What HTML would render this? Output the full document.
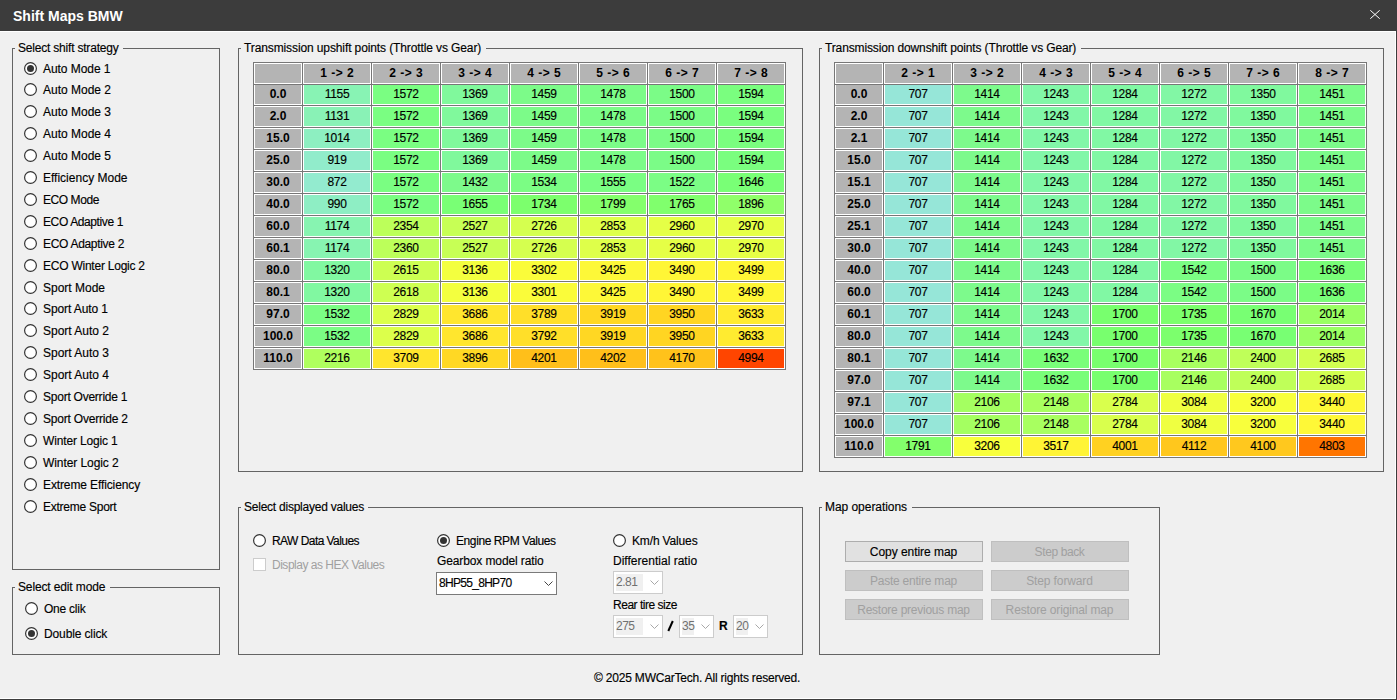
<!DOCTYPE html>
<html><head><meta charset="utf-8"><title>Shift Maps BMW</title>
<style>
*{margin:0;padding:0;box-sizing:border-box}
html,body{width:1397px;height:700px;overflow:hidden;background:#f0f0f0}
body{position:relative;font-family:"Liberation Sans",sans-serif;font-size:12px;color:#000;-webkit-text-stroke:0.15px currentColor}
div,i,span{position:absolute}
i{display:block}
#tbar{left:0;top:0;width:1397px;height:31px;background:#3c3c3c}
#title{left:13px;top:8px;color:#fff;font-weight:bold;font-size:14px;line-height:16px;white-space:nowrap;-webkit-text-stroke:0}
.gb{border:1px solid #646464}
.gt{background:#f0f0f0;padding:0 4.5px 0 3px;line-height:16px;white-space:nowrap;color:#000}
.tb{background:#fff}
.vl{position:absolute;top:0;width:1px;background:#777}
.hl{position:absolute;left:0;height:1px;background:#777}
.c{text-align:center;white-space:nowrap;overflow:hidden}
.c.b{font-weight:bold;-webkit-text-stroke:0}
.c.h{letter-spacing:0.45px;text-indent:0.45px}
.c.n{letter-spacing:-0.3px}
.lb{line-height:16px;white-space:nowrap}
.btn{height:21px;border:1px solid #adadad;background:#e1e1e1;text-align:center;line-height:19px;padding-top:1px;text-indent:-1px;white-space:nowrap}
.btn.dis{background:#cccccc;border-color:#bfbfbf;color:#a0a0a0;-webkit-text-stroke:0}
.cb{background:#fff;border:1px solid #7a7a7a}
.cb.dis{border-color:#cccccc}
</style></head><body>
<div id="tbar"></div>
<div id="title">Shift Maps BMW</div>

<svg style="position:absolute;left:1370px;top:10px" width="10" height="9" viewBox="0 0 10 9"><path d="M0.3 0.3L9.7 8.7M9.7 0.3L0.3 8.7" stroke="#fff" stroke-width="1"/></svg>
<i style="position:absolute;left:0;top:31px;width:1396px;height:1px;background:#fff"></i>
<i style="position:absolute;left:1395px;top:31px;width:1px;height:668px;background:#fff"></i>
<i style="position:absolute;left:0;top:698px;width:1396px;height:1px;background:#fff"></i>
<i style="position:absolute;left:1396px;top:0;width:1px;height:700px;background:#3c3c3c"></i>
<i style="position:absolute;left:0;top:699px;width:1397px;height:1px;background:#3c3c3c"></i>
<div class="gb" style="left:12px;top:48px;width:208px;height:522px"></div><div class="gt" style="left:15px;top:40px;letter-spacing:-0.200px;">Select shift strategy</div>
<svg style="position:absolute;left:24px;top:62px" width="13" height="13" viewBox="0 0 13 13"><circle cx="6.5" cy="6.5" r="5.9" fill="#fff" stroke="#333" stroke-width="1.2"/><circle cx="6.5" cy="6.5" r="3.5" fill="#333"/></svg><div class="lb" style="left:43px;top:61px;letter-spacing:-0.050px;">Auto Mode 1</div>
<svg style="position:absolute;left:24px;top:83px" width="13" height="13" viewBox="0 0 13 13"><circle cx="6.5" cy="6.5" r="5.9" fill="#fff" stroke="#333" stroke-width="1.2"/></svg><div class="lb" style="left:43px;top:82px;letter-spacing:0.000px;">Auto Mode 2</div>
<svg style="position:absolute;left:24px;top:105px" width="13" height="13" viewBox="0 0 13 13"><circle cx="6.5" cy="6.5" r="5.9" fill="#fff" stroke="#333" stroke-width="1.2"/></svg><div class="lb" style="left:43px;top:104px;letter-spacing:0.000px;">Auto Mode 3</div>
<svg style="position:absolute;left:24px;top:127px" width="13" height="13" viewBox="0 0 13 13"><circle cx="6.5" cy="6.5" r="5.9" fill="#fff" stroke="#333" stroke-width="1.2"/></svg><div class="lb" style="left:43px;top:126px;letter-spacing:0.000px;">Auto Mode 4</div>
<svg style="position:absolute;left:24px;top:149px" width="13" height="13" viewBox="0 0 13 13"><circle cx="6.5" cy="6.5" r="5.9" fill="#fff" stroke="#333" stroke-width="1.2"/></svg><div class="lb" style="left:43px;top:148px;letter-spacing:0.000px;">Auto Mode 5</div>
<svg style="position:absolute;left:24px;top:171px" width="13" height="13" viewBox="0 0 13 13"><circle cx="6.5" cy="6.5" r="5.9" fill="#fff" stroke="#333" stroke-width="1.2"/></svg><div class="lb" style="left:43px;top:170px;letter-spacing:0.000px;">Efficiency Mode</div>
<svg style="position:absolute;left:24px;top:193px" width="13" height="13" viewBox="0 0 13 13"><circle cx="6.5" cy="6.5" r="5.9" fill="#fff" stroke="#333" stroke-width="1.2"/></svg><div class="lb" style="left:43px;top:192px;letter-spacing:-0.429px;">ECO Mode</div>
<svg style="position:absolute;left:24px;top:215px" width="13" height="13" viewBox="0 0 13 13"><circle cx="6.5" cy="6.5" r="5.9" fill="#fff" stroke="#333" stroke-width="1.2"/></svg><div class="lb" style="left:43px;top:214px;letter-spacing:-0.385px;">ECO Adaptive 1</div>
<svg style="position:absolute;left:24px;top:237px" width="13" height="13" viewBox="0 0 13 13"><circle cx="6.5" cy="6.5" r="5.9" fill="#fff" stroke="#333" stroke-width="1.2"/></svg><div class="lb" style="left:43px;top:236px;letter-spacing:-0.308px;">ECO Adaptive 2</div>
<svg style="position:absolute;left:24px;top:259px" width="13" height="13" viewBox="0 0 13 13"><circle cx="6.5" cy="6.5" r="5.9" fill="#fff" stroke="#333" stroke-width="1.2"/></svg><div class="lb" style="left:43px;top:258px;letter-spacing:-0.235px;">ECO Winter Logic 2</div>
<svg style="position:absolute;left:24px;top:281px" width="13" height="13" viewBox="0 0 13 13"><circle cx="6.5" cy="6.5" r="5.9" fill="#fff" stroke="#333" stroke-width="1.2"/></svg><div class="lb" style="left:43px;top:280px;letter-spacing:0.000px;">Sport Mode</div>
<svg style="position:absolute;left:24px;top:302px" width="13" height="13" viewBox="0 0 13 13"><circle cx="6.5" cy="6.5" r="5.9" fill="#fff" stroke="#333" stroke-width="1.2"/></svg><div class="lb" style="left:43px;top:301px;letter-spacing:-0.091px;">Sport Auto 1</div>
<svg style="position:absolute;left:24px;top:324px" width="13" height="13" viewBox="0 0 13 13"><circle cx="6.5" cy="6.5" r="5.9" fill="#fff" stroke="#333" stroke-width="1.2"/></svg><div class="lb" style="left:43px;top:323px;letter-spacing:0.000px;">Sport Auto 2</div>
<svg style="position:absolute;left:24px;top:346px" width="13" height="13" viewBox="0 0 13 13"><circle cx="6.5" cy="6.5" r="5.9" fill="#fff" stroke="#333" stroke-width="1.2"/></svg><div class="lb" style="left:43px;top:345px;letter-spacing:0.000px;">Sport Auto 3</div>
<svg style="position:absolute;left:24px;top:368px" width="13" height="13" viewBox="0 0 13 13"><circle cx="6.5" cy="6.5" r="5.9" fill="#fff" stroke="#333" stroke-width="1.2"/></svg><div class="lb" style="left:43px;top:367px;letter-spacing:0.000px;">Sport Auto 4</div>
<svg style="position:absolute;left:24px;top:390px" width="13" height="13" viewBox="0 0 13 13"><circle cx="6.5" cy="6.5" r="5.9" fill="#fff" stroke="#333" stroke-width="1.2"/></svg><div class="lb" style="left:43px;top:389px;letter-spacing:-0.240px;">Sport Override 1</div>
<svg style="position:absolute;left:24px;top:412px" width="13" height="13" viewBox="0 0 13 13"><circle cx="6.5" cy="6.5" r="5.9" fill="#fff" stroke="#333" stroke-width="1.2"/></svg><div class="lb" style="left:43px;top:411px;letter-spacing:-0.200px;">Sport Override 2</div>
<svg style="position:absolute;left:24px;top:434px" width="13" height="13" viewBox="0 0 13 13"><circle cx="6.5" cy="6.5" r="5.9" fill="#fff" stroke="#333" stroke-width="1.2"/></svg><div class="lb" style="left:43px;top:433px;letter-spacing:-0.154px;">Winter Logic 1</div>
<svg style="position:absolute;left:24px;top:456px" width="13" height="13" viewBox="0 0 13 13"><circle cx="6.5" cy="6.5" r="5.9" fill="#fff" stroke="#333" stroke-width="1.2"/></svg><div class="lb" style="left:43px;top:455px;letter-spacing:-0.077px;">Winter Logic 2</div>
<svg style="position:absolute;left:24px;top:478px" width="13" height="13" viewBox="0 0 13 13"><circle cx="6.5" cy="6.5" r="5.9" fill="#fff" stroke="#333" stroke-width="1.2"/></svg><div class="lb" style="left:43px;top:477px;letter-spacing:-0.118px;">Extreme Efficiency</div>
<svg style="position:absolute;left:24px;top:500px" width="13" height="13" viewBox="0 0 13 13"><circle cx="6.5" cy="6.5" r="5.9" fill="#fff" stroke="#333" stroke-width="1.2"/></svg><div class="lb" style="left:43px;top:499px;letter-spacing:-0.250px;">Extreme Sport</div>
<div class="gb" style="left:12px;top:587px;width:208px;height:68px"></div><div class="gt" style="left:15px;top:579px;letter-spacing:-0.133px;">Select edit mode</div>
<svg style="position:absolute;left:25px;top:602px" width="13" height="13" viewBox="0 0 13 13"><circle cx="6.5" cy="6.5" r="5.9" fill="#fff" stroke="#333" stroke-width="1.2"/></svg><div class="lb" style="left:44px;top:601px;letter-spacing:-0.243px;">One clik</div>
<svg style="position:absolute;left:25px;top:627px" width="13" height="13" viewBox="0 0 13 13"><circle cx="6.5" cy="6.5" r="5.9" fill="#fff" stroke="#333" stroke-width="1.2"/><circle cx="6.5" cy="6.5" r="3.5" fill="#333"/></svg><div class="lb" style="left:44px;top:626px;letter-spacing:-0.127px;">Double click</div>
<div class="gb" style="left:238px;top:48px;width:565px;height:424px"></div><div class="gt" style="left:241px;top:40px;letter-spacing:-0.111px;">Transmission upshift points (Throttle vs Gear)</div>
<div class="tb" style="left:253px;top:62px;width:533px;height:308px">
<i class="vl" style="left:0px;height:308px"></i>
<i class="vl" style="left:49px;height:308px"></i>
<i class="vl" style="left:118px;height:308px"></i>
<i class="vl" style="left:187px;height:308px"></i>
<i class="vl" style="left:256px;height:308px"></i>
<i class="vl" style="left:325px;height:308px"></i>
<i class="vl" style="left:394px;height:308px"></i>
<i class="vl" style="left:463px;height:308px"></i>
<i class="vl" style="left:532px;height:308px"></i>
<i class="hl" style="top:0px;width:533px"></i>
<i class="hl" style="top:22px;width:533px"></i>
<i class="hl" style="top:43px;width:533px"></i>
<i class="hl" style="top:65px;width:533px"></i>
<i class="hl" style="top:87px;width:533px"></i>
<i class="hl" style="top:109px;width:533px"></i>
<i class="hl" style="top:131px;width:533px"></i>
<i class="hl" style="top:153px;width:533px"></i>
<i class="hl" style="top:175px;width:533px"></i>
<i class="hl" style="top:197px;width:533px"></i>
<i class="hl" style="top:219px;width:533px"></i>
<i class="hl" style="top:241px;width:533px"></i>
<i class="hl" style="top:263px;width:533px"></i>
<i class="hl" style="top:285px;width:533px"></i>
<i class="hl" style="top:307px;width:533px"></i>
<div class="c b h" style="left:2px;top:2px;width:46px;height:19px;background:#b4b4b4;line-height:19px"></div>
<div class="c b h" style="left:51px;top:2px;width:66px;height:19px;background:#b4b4b4;line-height:19px">1 -> 2</div>
<div class="c b h" style="left:120px;top:2px;width:66px;height:19px;background:#b4b4b4;line-height:19px">2 -> 3</div>
<div class="c b h" style="left:189px;top:2px;width:66px;height:19px;background:#b4b4b4;line-height:19px">3 -> 4</div>
<div class="c b h" style="left:258px;top:2px;width:66px;height:19px;background:#b4b4b4;line-height:19px">4 -> 5</div>
<div class="c b h" style="left:327px;top:2px;width:66px;height:19px;background:#b4b4b4;line-height:19px">5 -> 6</div>
<div class="c b h" style="left:396px;top:2px;width:66px;height:19px;background:#b4b4b4;line-height:19px">6 -> 7</div>
<div class="c b h" style="left:465px;top:2px;width:66px;height:19px;background:#b4b4b4;line-height:19px">7 -> 8</div>
<div class="c b" style="left:2px;top:23px;width:46px;height:19px;background:#b4b4b4;line-height:19px">0.0</div>
<div class="c n" style="left:51px;top:23px;width:66px;height:19px;background:#88f3b4;line-height:19px">1155</div>
<div class="c n" style="left:120px;top:23px;width:66px;height:19px;background:#7afe82;line-height:19px">1572</div>
<div class="c n" style="left:189px;top:23px;width:66px;height:19px;background:#80f99c;line-height:19px">1369</div>
<div class="c n" style="left:258px;top:23px;width:66px;height:19px;background:#7cfb89;line-height:19px">1459</div>
<div class="c n" style="left:327px;top:23px;width:66px;height:19px;background:#7cfc88;line-height:19px">1478</div>
<div class="c n" style="left:396px;top:23px;width:66px;height:19px;background:#7bfc87;line-height:19px">1500</div>
<div class="c n" style="left:465px;top:23px;width:66px;height:19px;background:#7afe7f;line-height:19px">1594</div>
<div class="c b" style="left:2px;top:45px;width:46px;height:19px;background:#b4b4b4;line-height:19px">2.0</div>
<div class="c n" style="left:51px;top:45px;width:66px;height:19px;background:#89f2b6;line-height:19px">1131</div>
<div class="c n" style="left:120px;top:45px;width:66px;height:19px;background:#7afe82;line-height:19px">1572</div>
<div class="c n" style="left:189px;top:45px;width:66px;height:19px;background:#80f99c;line-height:19px">1369</div>
<div class="c n" style="left:258px;top:45px;width:66px;height:19px;background:#7cfb89;line-height:19px">1459</div>
<div class="c n" style="left:327px;top:45px;width:66px;height:19px;background:#7cfc88;line-height:19px">1478</div>
<div class="c n" style="left:396px;top:45px;width:66px;height:19px;background:#7bfc87;line-height:19px">1500</div>
<div class="c n" style="left:465px;top:45px;width:66px;height:19px;background:#7afe7f;line-height:19px">1594</div>
<div class="c b" style="left:2px;top:67px;width:46px;height:19px;background:#b4b4b4;line-height:19px">15.0</div>
<div class="c n" style="left:51px;top:67px;width:66px;height:19px;background:#8defc1;line-height:19px">1014</div>
<div class="c n" style="left:120px;top:67px;width:66px;height:19px;background:#7afe82;line-height:19px">1572</div>
<div class="c n" style="left:189px;top:67px;width:66px;height:19px;background:#80f99c;line-height:19px">1369</div>
<div class="c n" style="left:258px;top:67px;width:66px;height:19px;background:#7cfb89;line-height:19px">1459</div>
<div class="c n" style="left:327px;top:67px;width:66px;height:19px;background:#7cfc88;line-height:19px">1478</div>
<div class="c n" style="left:396px;top:67px;width:66px;height:19px;background:#7bfc87;line-height:19px">1500</div>
<div class="c n" style="left:465px;top:67px;width:66px;height:19px;background:#7afe7f;line-height:19px">1594</div>
<div class="c b" style="left:2px;top:89px;width:46px;height:19px;background:#b4b4b4;line-height:19px">25.0</div>
<div class="c n" style="left:51px;top:89px;width:66px;height:19px;background:#91eccb;line-height:19px">919</div>
<div class="c n" style="left:120px;top:89px;width:66px;height:19px;background:#7afe82;line-height:19px">1572</div>
<div class="c n" style="left:189px;top:89px;width:66px;height:19px;background:#80f99c;line-height:19px">1369</div>
<div class="c n" style="left:258px;top:89px;width:66px;height:19px;background:#7cfb89;line-height:19px">1459</div>
<div class="c n" style="left:327px;top:89px;width:66px;height:19px;background:#7cfc88;line-height:19px">1478</div>
<div class="c n" style="left:396px;top:89px;width:66px;height:19px;background:#7bfc87;line-height:19px">1500</div>
<div class="c n" style="left:465px;top:89px;width:66px;height:19px;background:#7afe7f;line-height:19px">1594</div>
<div class="c b" style="left:2px;top:111px;width:46px;height:19px;background:#b4b4b4;line-height:19px">30.0</div>
<div class="c n" style="left:51px;top:111px;width:66px;height:19px;background:#93ebcf;line-height:19px">872</div>
<div class="c n" style="left:120px;top:111px;width:66px;height:19px;background:#7afe82;line-height:19px">1572</div>
<div class="c n" style="left:189px;top:111px;width:66px;height:19px;background:#7dfa8b;line-height:19px">1432</div>
<div class="c n" style="left:258px;top:111px;width:66px;height:19px;background:#7bfd84;line-height:19px">1534</div>
<div class="c n" style="left:327px;top:111px;width:66px;height:19px;background:#7afe83;line-height:19px">1555</div>
<div class="c n" style="left:396px;top:111px;width:66px;height:19px;background:#7bfd85;line-height:19px">1522</div>
<div class="c n" style="left:465px;top:111px;width:66px;height:19px;background:#79ff76;line-height:19px">1646</div>
<div class="c b" style="left:2px;top:133px;width:46px;height:19px;background:#b4b4b4;line-height:19px">40.0</div>
<div class="c n" style="left:51px;top:133px;width:66px;height:19px;background:#8eeec4;line-height:19px">990</div>
<div class="c n" style="left:120px;top:133px;width:66px;height:19px;background:#7afe82;line-height:19px">1572</div>
<div class="c n" style="left:189px;top:133px;width:66px;height:19px;background:#79ff75;line-height:19px">1655</div>
<div class="c n" style="left:258px;top:133px;width:66px;height:19px;background:#7cff6d;line-height:19px">1734</div>
<div class="c n" style="left:327px;top:133px;width:66px;height:19px;background:#84ff6c;line-height:19px">1799</div>
<div class="c n" style="left:396px;top:133px;width:66px;height:19px;background:#80ff6d;line-height:19px">1765</div>
<div class="c n" style="left:465px;top:133px;width:66px;height:19px;background:#90ff6a;line-height:19px">1896</div>
<div class="c b" style="left:2px;top:155px;width:46px;height:19px;background:#b4b4b4;line-height:19px">60.0</div>
<div class="c n" style="left:51px;top:155px;width:66px;height:19px;background:#87f4b1;line-height:19px">1174</div>
<div class="c n" style="left:120px;top:155px;width:66px;height:19px;background:#bcff5a;line-height:19px">2354</div>
<div class="c n" style="left:189px;top:155px;width:66px;height:19px;background:#c7ff55;line-height:19px">2527</div>
<div class="c n" style="left:258px;top:155px;width:66px;height:19px;background:#d5ff4f;line-height:19px">2726</div>
<div class="c n" style="left:327px;top:155px;width:66px;height:19px;background:#deff4a;line-height:19px">2853</div>
<div class="c n" style="left:396px;top:155px;width:66px;height:19px;background:#e5ff46;line-height:19px">2960</div>
<div class="c n" style="left:465px;top:155px;width:66px;height:19px;background:#e6ff46;line-height:19px">2970</div>
<div class="c b" style="left:2px;top:177px;width:46px;height:19px;background:#b4b4b4;line-height:19px">60.1</div>
<div class="c n" style="left:51px;top:177px;width:66px;height:19px;background:#87f4b1;line-height:19px">1174</div>
<div class="c n" style="left:120px;top:177px;width:66px;height:19px;background:#bcff5a;line-height:19px">2360</div>
<div class="c n" style="left:189px;top:177px;width:66px;height:19px;background:#c7ff55;line-height:19px">2527</div>
<div class="c n" style="left:258px;top:177px;width:66px;height:19px;background:#d5ff4f;line-height:19px">2726</div>
<div class="c n" style="left:327px;top:177px;width:66px;height:19px;background:#deff4a;line-height:19px">2853</div>
<div class="c n" style="left:396px;top:177px;width:66px;height:19px;background:#e5ff46;line-height:19px">2960</div>
<div class="c n" style="left:465px;top:177px;width:66px;height:19px;background:#e6ff46;line-height:19px">2970</div>
<div class="c b" style="left:2px;top:199px;width:46px;height:19px;background:#b4b4b4;line-height:19px">80.0</div>
<div class="c n" style="left:51px;top:199px;width:66px;height:19px;background:#81f8a1;line-height:19px">1320</div>
<div class="c n" style="left:120px;top:199px;width:66px;height:19px;background:#cdff52;line-height:19px">2615</div>
<div class="c n" style="left:189px;top:199px;width:66px;height:19px;background:#f3ff3f;line-height:19px">3136</div>
<div class="c n" style="left:258px;top:199px;width:66px;height:19px;background:#fafc3a;line-height:19px">3302</div>
<div class="c n" style="left:327px;top:199px;width:66px;height:19px;background:#fdf838;line-height:19px">3425</div>
<div class="c n" style="left:396px;top:199px;width:66px;height:19px;background:#fff636;line-height:19px">3490</div>
<div class="c n" style="left:465px;top:199px;width:66px;height:19px;background:#fff636;line-height:19px">3499</div>
<div class="c b" style="left:2px;top:221px;width:46px;height:19px;background:#b4b4b4;line-height:19px">80.1</div>
<div class="c n" style="left:51px;top:221px;width:66px;height:19px;background:#81f8a1;line-height:19px">1320</div>
<div class="c n" style="left:120px;top:221px;width:66px;height:19px;background:#ceff52;line-height:19px">2618</div>
<div class="c n" style="left:189px;top:221px;width:66px;height:19px;background:#f3ff3f;line-height:19px">3136</div>
<div class="c n" style="left:258px;top:221px;width:66px;height:19px;background:#fafc3a;line-height:19px">3301</div>
<div class="c n" style="left:327px;top:221px;width:66px;height:19px;background:#fdf838;line-height:19px">3425</div>
<div class="c n" style="left:396px;top:221px;width:66px;height:19px;background:#fff636;line-height:19px">3490</div>
<div class="c n" style="left:465px;top:221px;width:66px;height:19px;background:#fff636;line-height:19px">3499</div>
<div class="c b" style="left:2px;top:243px;width:46px;height:19px;background:#b4b4b4;line-height:19px">97.0</div>
<div class="c n" style="left:51px;top:243px;width:66px;height:19px;background:#7bfd85;line-height:19px">1532</div>
<div class="c n" style="left:120px;top:243px;width:66px;height:19px;background:#dcff4b;line-height:19px">2829</div>
<div class="c n" style="left:189px;top:243px;width:66px;height:19px;background:#ffe62e;line-height:19px">3686</div>
<div class="c n" style="left:258px;top:243px;width:66px;height:19px;background:#ffdf29;line-height:19px">3789</div>
<div class="c n" style="left:327px;top:243px;width:66px;height:19px;background:#ffd723;line-height:19px">3919</div>
<div class="c n" style="left:396px;top:243px;width:66px;height:19px;background:#ffd522;line-height:19px">3950</div>
<div class="c n" style="left:465px;top:243px;width:66px;height:19px;background:#ffeb30;line-height:19px">3633</div>
<div class="c b" style="left:2px;top:265px;width:46px;height:19px;background:#b4b4b4;line-height:19px">100.0</div>
<div class="c n" style="left:51px;top:265px;width:66px;height:19px;background:#7bfd85;line-height:19px">1532</div>
<div class="c n" style="left:120px;top:265px;width:66px;height:19px;background:#dcff4b;line-height:19px">2829</div>
<div class="c n" style="left:189px;top:265px;width:66px;height:19px;background:#ffe62e;line-height:19px">3686</div>
<div class="c n" style="left:258px;top:265px;width:66px;height:19px;background:#ffdf29;line-height:19px">3792</div>
<div class="c n" style="left:327px;top:265px;width:66px;height:19px;background:#ffd723;line-height:19px">3919</div>
<div class="c n" style="left:396px;top:265px;width:66px;height:19px;background:#ffd522;line-height:19px">3950</div>
<div class="c n" style="left:465px;top:265px;width:66px;height:19px;background:#ffeb30;line-height:19px">3633</div>
<div class="c b" style="left:2px;top:287px;width:46px;height:19px;background:#b4b4b4;line-height:19px">110.0</div>
<div class="c n" style="left:51px;top:287px;width:66px;height:19px;background:#afff5e;line-height:19px">2216</div>
<div class="c n" style="left:120px;top:287px;width:66px;height:19px;background:#ffe52d;line-height:19px">3709</div>
<div class="c n" style="left:189px;top:287px;width:66px;height:19px;background:#ffd824;line-height:19px">3896</div>
<div class="c n" style="left:258px;top:287px;width:66px;height:19px;background:#ffbf1a;line-height:19px">4201</div>
<div class="c n" style="left:327px;top:287px;width:66px;height:19px;background:#ffbf1a;line-height:19px">4202</div>
<div class="c n" style="left:396px;top:287px;width:66px;height:19px;background:#ffc21b;line-height:19px">4170</div>
<div class="c n" style="left:465px;top:287px;width:66px;height:19px;background:#ff4500;line-height:19px">4994</div>
</div>
<div class="gb" style="left:819px;top:48px;width:565px;height:424px"></div><div class="gt" style="left:822px;top:40px;letter-spacing:-0.134px;">Transmission downshift points (Throttle vs Gear)</div>
<div class="tb" style="left:834px;top:62px;width:533px;height:396px">
<i class="vl" style="left:0px;height:396px"></i>
<i class="vl" style="left:49px;height:396px"></i>
<i class="vl" style="left:118px;height:396px"></i>
<i class="vl" style="left:187px;height:396px"></i>
<i class="vl" style="left:256px;height:396px"></i>
<i class="vl" style="left:325px;height:396px"></i>
<i class="vl" style="left:394px;height:396px"></i>
<i class="vl" style="left:463px;height:396px"></i>
<i class="vl" style="left:532px;height:396px"></i>
<i class="hl" style="top:0px;width:533px"></i>
<i class="hl" style="top:22px;width:533px"></i>
<i class="hl" style="top:43px;width:533px"></i>
<i class="hl" style="top:65px;width:533px"></i>
<i class="hl" style="top:87px;width:533px"></i>
<i class="hl" style="top:109px;width:533px"></i>
<i class="hl" style="top:131px;width:533px"></i>
<i class="hl" style="top:153px;width:533px"></i>
<i class="hl" style="top:175px;width:533px"></i>
<i class="hl" style="top:197px;width:533px"></i>
<i class="hl" style="top:219px;width:533px"></i>
<i class="hl" style="top:241px;width:533px"></i>
<i class="hl" style="top:263px;width:533px"></i>
<i class="hl" style="top:285px;width:533px"></i>
<i class="hl" style="top:307px;width:533px"></i>
<i class="hl" style="top:329px;width:533px"></i>
<i class="hl" style="top:351px;width:533px"></i>
<i class="hl" style="top:373px;width:533px"></i>
<i class="hl" style="top:395px;width:533px"></i>
<div class="c b h" style="left:2px;top:2px;width:46px;height:19px;background:#b4b4b4;line-height:19px"></div>
<div class="c b h" style="left:51px;top:2px;width:66px;height:19px;background:#b4b4b4;line-height:19px">2 -> 1</div>
<div class="c b h" style="left:120px;top:2px;width:66px;height:19px;background:#b4b4b4;line-height:19px">3 -> 2</div>
<div class="c b h" style="left:189px;top:2px;width:66px;height:19px;background:#b4b4b4;line-height:19px">4 -> 3</div>
<div class="c b h" style="left:258px;top:2px;width:66px;height:19px;background:#b4b4b4;line-height:19px">5 -> 4</div>
<div class="c b h" style="left:327px;top:2px;width:66px;height:19px;background:#b4b4b4;line-height:19px">6 -> 5</div>
<div class="c b h" style="left:396px;top:2px;width:66px;height:19px;background:#b4b4b4;line-height:19px">7 -> 6</div>
<div class="c b h" style="left:465px;top:2px;width:66px;height:19px;background:#b4b4b4;line-height:19px">8 -> 7</div>
<div class="c b" style="left:2px;top:23px;width:46px;height:19px;background:#b4b4b4;line-height:19px">0.0</div>
<div class="c n" style="left:51px;top:23px;width:66px;height:19px;background:#96e6d8;line-height:19px">707</div>
<div class="c n" style="left:120px;top:23px;width:66px;height:19px;background:#7dfa8c;line-height:19px">1414</div>
<div class="c n" style="left:189px;top:23px;width:66px;height:19px;background:#82f7a8;line-height:19px">1243</div>
<div class="c n" style="left:258px;top:23px;width:66px;height:19px;background:#81f8a4;line-height:19px">1284</div>
<div class="c n" style="left:327px;top:23px;width:66px;height:19px;background:#82f7a5;line-height:19px">1272</div>
<div class="c n" style="left:396px;top:23px;width:66px;height:19px;background:#80f99e;line-height:19px">1350</div>
<div class="c n" style="left:465px;top:23px;width:66px;height:19px;background:#7cfb8a;line-height:19px">1451</div>
<div class="c b" style="left:2px;top:45px;width:46px;height:19px;background:#b4b4b4;line-height:19px">2.0</div>
<div class="c n" style="left:51px;top:45px;width:66px;height:19px;background:#96e6d8;line-height:19px">707</div>
<div class="c n" style="left:120px;top:45px;width:66px;height:19px;background:#7dfa8c;line-height:19px">1414</div>
<div class="c n" style="left:189px;top:45px;width:66px;height:19px;background:#82f7a8;line-height:19px">1243</div>
<div class="c n" style="left:258px;top:45px;width:66px;height:19px;background:#81f8a4;line-height:19px">1284</div>
<div class="c n" style="left:327px;top:45px;width:66px;height:19px;background:#82f7a5;line-height:19px">1272</div>
<div class="c n" style="left:396px;top:45px;width:66px;height:19px;background:#80f99e;line-height:19px">1350</div>
<div class="c n" style="left:465px;top:45px;width:66px;height:19px;background:#7cfb8a;line-height:19px">1451</div>
<div class="c b" style="left:2px;top:67px;width:46px;height:19px;background:#b4b4b4;line-height:19px">2.1</div>
<div class="c n" style="left:51px;top:67px;width:66px;height:19px;background:#96e6d8;line-height:19px">707</div>
<div class="c n" style="left:120px;top:67px;width:66px;height:19px;background:#7dfa8c;line-height:19px">1414</div>
<div class="c n" style="left:189px;top:67px;width:66px;height:19px;background:#82f7a8;line-height:19px">1243</div>
<div class="c n" style="left:258px;top:67px;width:66px;height:19px;background:#81f8a4;line-height:19px">1284</div>
<div class="c n" style="left:327px;top:67px;width:66px;height:19px;background:#82f7a5;line-height:19px">1272</div>
<div class="c n" style="left:396px;top:67px;width:66px;height:19px;background:#80f99e;line-height:19px">1350</div>
<div class="c n" style="left:465px;top:67px;width:66px;height:19px;background:#7cfb8a;line-height:19px">1451</div>
<div class="c b" style="left:2px;top:89px;width:46px;height:19px;background:#b4b4b4;line-height:19px">15.0</div>
<div class="c n" style="left:51px;top:89px;width:66px;height:19px;background:#96e6d8;line-height:19px">707</div>
<div class="c n" style="left:120px;top:89px;width:66px;height:19px;background:#7dfa8c;line-height:19px">1414</div>
<div class="c n" style="left:189px;top:89px;width:66px;height:19px;background:#82f7a8;line-height:19px">1243</div>
<div class="c n" style="left:258px;top:89px;width:66px;height:19px;background:#81f8a4;line-height:19px">1284</div>
<div class="c n" style="left:327px;top:89px;width:66px;height:19px;background:#82f7a5;line-height:19px">1272</div>
<div class="c n" style="left:396px;top:89px;width:66px;height:19px;background:#80f99e;line-height:19px">1350</div>
<div class="c n" style="left:465px;top:89px;width:66px;height:19px;background:#7cfb8a;line-height:19px">1451</div>
<div class="c b" style="left:2px;top:111px;width:46px;height:19px;background:#b4b4b4;line-height:19px">15.1</div>
<div class="c n" style="left:51px;top:111px;width:66px;height:19px;background:#96e6d8;line-height:19px">707</div>
<div class="c n" style="left:120px;top:111px;width:66px;height:19px;background:#7dfa8c;line-height:19px">1414</div>
<div class="c n" style="left:189px;top:111px;width:66px;height:19px;background:#82f7a8;line-height:19px">1243</div>
<div class="c n" style="left:258px;top:111px;width:66px;height:19px;background:#81f8a4;line-height:19px">1284</div>
<div class="c n" style="left:327px;top:111px;width:66px;height:19px;background:#82f7a5;line-height:19px">1272</div>
<div class="c n" style="left:396px;top:111px;width:66px;height:19px;background:#80f99e;line-height:19px">1350</div>
<div class="c n" style="left:465px;top:111px;width:66px;height:19px;background:#7cfb8a;line-height:19px">1451</div>
<div class="c b" style="left:2px;top:133px;width:46px;height:19px;background:#b4b4b4;line-height:19px">25.0</div>
<div class="c n" style="left:51px;top:133px;width:66px;height:19px;background:#96e6d8;line-height:19px">707</div>
<div class="c n" style="left:120px;top:133px;width:66px;height:19px;background:#7dfa8c;line-height:19px">1414</div>
<div class="c n" style="left:189px;top:133px;width:66px;height:19px;background:#82f7a8;line-height:19px">1243</div>
<div class="c n" style="left:258px;top:133px;width:66px;height:19px;background:#81f8a4;line-height:19px">1284</div>
<div class="c n" style="left:327px;top:133px;width:66px;height:19px;background:#82f7a5;line-height:19px">1272</div>
<div class="c n" style="left:396px;top:133px;width:66px;height:19px;background:#80f99e;line-height:19px">1350</div>
<div class="c n" style="left:465px;top:133px;width:66px;height:19px;background:#7cfb8a;line-height:19px">1451</div>
<div class="c b" style="left:2px;top:155px;width:46px;height:19px;background:#b4b4b4;line-height:19px">25.1</div>
<div class="c n" style="left:51px;top:155px;width:66px;height:19px;background:#96e6d8;line-height:19px">707</div>
<div class="c n" style="left:120px;top:155px;width:66px;height:19px;background:#7dfa8c;line-height:19px">1414</div>
<div class="c n" style="left:189px;top:155px;width:66px;height:19px;background:#82f7a8;line-height:19px">1243</div>
<div class="c n" style="left:258px;top:155px;width:66px;height:19px;background:#81f8a4;line-height:19px">1284</div>
<div class="c n" style="left:327px;top:155px;width:66px;height:19px;background:#82f7a5;line-height:19px">1272</div>
<div class="c n" style="left:396px;top:155px;width:66px;height:19px;background:#80f99e;line-height:19px">1350</div>
<div class="c n" style="left:465px;top:155px;width:66px;height:19px;background:#7cfb8a;line-height:19px">1451</div>
<div class="c b" style="left:2px;top:177px;width:46px;height:19px;background:#b4b4b4;line-height:19px">30.0</div>
<div class="c n" style="left:51px;top:177px;width:66px;height:19px;background:#96e6d8;line-height:19px">707</div>
<div class="c n" style="left:120px;top:177px;width:66px;height:19px;background:#7dfa8c;line-height:19px">1414</div>
<div class="c n" style="left:189px;top:177px;width:66px;height:19px;background:#82f7a8;line-height:19px">1243</div>
<div class="c n" style="left:258px;top:177px;width:66px;height:19px;background:#81f8a4;line-height:19px">1284</div>
<div class="c n" style="left:327px;top:177px;width:66px;height:19px;background:#82f7a5;line-height:19px">1272</div>
<div class="c n" style="left:396px;top:177px;width:66px;height:19px;background:#80f99e;line-height:19px">1350</div>
<div class="c n" style="left:465px;top:177px;width:66px;height:19px;background:#7cfb8a;line-height:19px">1451</div>
<div class="c b" style="left:2px;top:199px;width:46px;height:19px;background:#b4b4b4;line-height:19px">40.0</div>
<div class="c n" style="left:51px;top:199px;width:66px;height:19px;background:#96e6d8;line-height:19px">707</div>
<div class="c n" style="left:120px;top:199px;width:66px;height:19px;background:#7dfa8c;line-height:19px">1414</div>
<div class="c n" style="left:189px;top:199px;width:66px;height:19px;background:#82f7a8;line-height:19px">1243</div>
<div class="c n" style="left:258px;top:199px;width:66px;height:19px;background:#81f8a4;line-height:19px">1284</div>
<div class="c n" style="left:327px;top:199px;width:66px;height:19px;background:#7bfd84;line-height:19px">1542</div>
<div class="c n" style="left:396px;top:199px;width:66px;height:19px;background:#7bfc87;line-height:19px">1500</div>
<div class="c n" style="left:465px;top:199px;width:66px;height:19px;background:#79fe78;line-height:19px">1636</div>
<div class="c b" style="left:2px;top:221px;width:46px;height:19px;background:#b4b4b4;line-height:19px">60.0</div>
<div class="c n" style="left:51px;top:221px;width:66px;height:19px;background:#96e6d8;line-height:19px">707</div>
<div class="c n" style="left:120px;top:221px;width:66px;height:19px;background:#7dfa8c;line-height:19px">1414</div>
<div class="c n" style="left:189px;top:221px;width:66px;height:19px;background:#82f7a8;line-height:19px">1243</div>
<div class="c n" style="left:258px;top:221px;width:66px;height:19px;background:#81f8a4;line-height:19px">1284</div>
<div class="c n" style="left:327px;top:221px;width:66px;height:19px;background:#7bfd84;line-height:19px">1542</div>
<div class="c n" style="left:396px;top:221px;width:66px;height:19px;background:#7bfc87;line-height:19px">1500</div>
<div class="c n" style="left:465px;top:221px;width:66px;height:19px;background:#79fe78;line-height:19px">1636</div>
<div class="c b" style="left:2px;top:243px;width:46px;height:19px;background:#b4b4b4;line-height:19px">60.1</div>
<div class="c n" style="left:51px;top:243px;width:66px;height:19px;background:#96e6d8;line-height:19px">707</div>
<div class="c n" style="left:120px;top:243px;width:66px;height:19px;background:#7dfa8c;line-height:19px">1414</div>
<div class="c n" style="left:189px;top:243px;width:66px;height:19px;background:#82f7a8;line-height:19px">1243</div>
<div class="c n" style="left:258px;top:243px;width:66px;height:19px;background:#78ff6e;line-height:19px">1700</div>
<div class="c n" style="left:327px;top:243px;width:66px;height:19px;background:#7cff6d;line-height:19px">1735</div>
<div class="c n" style="left:396px;top:243px;width:66px;height:19px;background:#78ff73;line-height:19px">1670</div>
<div class="c n" style="left:465px;top:243px;width:66px;height:19px;background:#9aff64;line-height:19px">2014</div>
<div class="c b" style="left:2px;top:265px;width:46px;height:19px;background:#b4b4b4;line-height:19px">80.0</div>
<div class="c n" style="left:51px;top:265px;width:66px;height:19px;background:#96e6d8;line-height:19px">707</div>
<div class="c n" style="left:120px;top:265px;width:66px;height:19px;background:#7dfa8c;line-height:19px">1414</div>
<div class="c n" style="left:189px;top:265px;width:66px;height:19px;background:#82f7a8;line-height:19px">1243</div>
<div class="c n" style="left:258px;top:265px;width:66px;height:19px;background:#78ff6e;line-height:19px">1700</div>
<div class="c n" style="left:327px;top:265px;width:66px;height:19px;background:#7cff6d;line-height:19px">1735</div>
<div class="c n" style="left:396px;top:265px;width:66px;height:19px;background:#78ff73;line-height:19px">1670</div>
<div class="c n" style="left:465px;top:265px;width:66px;height:19px;background:#9aff64;line-height:19px">2014</div>
<div class="c b" style="left:2px;top:287px;width:46px;height:19px;background:#b4b4b4;line-height:19px">80.1</div>
<div class="c n" style="left:51px;top:287px;width:66px;height:19px;background:#96e6d8;line-height:19px">707</div>
<div class="c n" style="left:120px;top:287px;width:66px;height:19px;background:#7dfa8c;line-height:19px">1414</div>
<div class="c n" style="left:189px;top:287px;width:66px;height:19px;background:#79fe79;line-height:19px">1632</div>
<div class="c n" style="left:258px;top:287px;width:66px;height:19px;background:#78ff6e;line-height:19px">1700</div>
<div class="c n" style="left:327px;top:287px;width:66px;height:19px;background:#a8ff60;line-height:19px">2146</div>
<div class="c n" style="left:396px;top:287px;width:66px;height:19px;background:#bfff59;line-height:19px">2400</div>
<div class="c n" style="left:465px;top:287px;width:66px;height:19px;background:#d2ff50;line-height:19px">2685</div>
<div class="c b" style="left:2px;top:309px;width:46px;height:19px;background:#b4b4b4;line-height:19px">97.0</div>
<div class="c n" style="left:51px;top:309px;width:66px;height:19px;background:#96e6d8;line-height:19px">707</div>
<div class="c n" style="left:120px;top:309px;width:66px;height:19px;background:#7dfa8c;line-height:19px">1414</div>
<div class="c n" style="left:189px;top:309px;width:66px;height:19px;background:#79fe79;line-height:19px">1632</div>
<div class="c n" style="left:258px;top:309px;width:66px;height:19px;background:#78ff6e;line-height:19px">1700</div>
<div class="c n" style="left:327px;top:309px;width:66px;height:19px;background:#a8ff60;line-height:19px">2146</div>
<div class="c n" style="left:396px;top:309px;width:66px;height:19px;background:#bfff59;line-height:19px">2400</div>
<div class="c n" style="left:465px;top:309px;width:66px;height:19px;background:#d2ff50;line-height:19px">2685</div>
<div class="c b" style="left:2px;top:331px;width:46px;height:19px;background:#b4b4b4;line-height:19px">97.1</div>
<div class="c n" style="left:51px;top:331px;width:66px;height:19px;background:#96e6d8;line-height:19px">707</div>
<div class="c n" style="left:120px;top:331px;width:66px;height:19px;background:#a4ff61;line-height:19px">2106</div>
<div class="c n" style="left:189px;top:331px;width:66px;height:19px;background:#a8ff60;line-height:19px">2148</div>
<div class="c n" style="left:258px;top:331px;width:66px;height:19px;background:#d9ff4d;line-height:19px">2784</div>
<div class="c n" style="left:327px;top:331px;width:66px;height:19px;background:#efff41;line-height:19px">3084</div>
<div class="c n" style="left:396px;top:331px;width:66px;height:19px;background:#f8ff3c;line-height:19px">3200</div>
<div class="c n" style="left:465px;top:331px;width:66px;height:19px;background:#fef837;line-height:19px">3440</div>
<div class="c b" style="left:2px;top:353px;width:46px;height:19px;background:#b4b4b4;line-height:19px">100.0</div>
<div class="c n" style="left:51px;top:353px;width:66px;height:19px;background:#96e6d8;line-height:19px">707</div>
<div class="c n" style="left:120px;top:353px;width:66px;height:19px;background:#a4ff61;line-height:19px">2106</div>
<div class="c n" style="left:189px;top:353px;width:66px;height:19px;background:#a8ff60;line-height:19px">2148</div>
<div class="c n" style="left:258px;top:353px;width:66px;height:19px;background:#d9ff4d;line-height:19px">2784</div>
<div class="c n" style="left:327px;top:353px;width:66px;height:19px;background:#efff41;line-height:19px">3084</div>
<div class="c n" style="left:396px;top:353px;width:66px;height:19px;background:#f8ff3c;line-height:19px">3200</div>
<div class="c n" style="left:465px;top:353px;width:66px;height:19px;background:#fef837;line-height:19px">3440</div>
<div class="c b" style="left:2px;top:375px;width:46px;height:19px;background:#b4b4b4;line-height:19px">110.0</div>
<div class="c n" style="left:51px;top:375px;width:66px;height:19px;background:#83ff6c;line-height:19px">1791</div>
<div class="c n" style="left:120px;top:375px;width:66px;height:19px;background:#f8ff3c;line-height:19px">3206</div>
<div class="c n" style="left:189px;top:375px;width:66px;height:19px;background:#fff435;line-height:19px">3517</div>
<div class="c n" style="left:258px;top:375px;width:66px;height:19px;background:#ffd121;line-height:19px">4001</div>
<div class="c n" style="left:327px;top:375px;width:66px;height:19px;background:#ffc71d;line-height:19px">4112</div>
<div class="c n" style="left:396px;top:375px;width:66px;height:19px;background:#ffc81e;line-height:19px">4100</div>
<div class="c n" style="left:465px;top:375px;width:66px;height:19px;background:#ff7500;line-height:19px">4803</div>
</div>
<div class="gb" style="left:238px;top:507px;width:565px;height:148px"></div><div class="gt" style="left:241px;top:499px;letter-spacing:-0.236px;">Select displayed values</div>
<svg style="position:absolute;left:253px;top:534px" width="13" height="13" viewBox="0 0 13 13"><circle cx="6.5" cy="6.5" r="5.9" fill="#fff" stroke="#333" stroke-width="1.2"/></svg><div class="lb" style="left:272px;top:533px;letter-spacing:-0.557px;">RAW Data Values</div>
<div style="left:253px;top:558px;width:13px;height:13px;border:1px solid #cccccc;background:#fff"></div>
<div class="lb" style="left:272px;top:557px;letter-spacing:-0.485px;color:#a0a0a0;-webkit-text-stroke:0;">Display as HEX Values</div>
<svg style="position:absolute;left:437px;top:534px" width="13" height="13" viewBox="0 0 13 13"><circle cx="6.5" cy="6.5" r="5.9" fill="#fff" stroke="#333" stroke-width="1.2"/><circle cx="6.5" cy="6.5" r="3.5" fill="#333"/></svg><div class="lb" style="left:456px;top:533px;letter-spacing:-0.406px;">Engine RPM Values</div>
<div class="lb" style="left:437px;top:553px;letter-spacing:-0.111px;">Gearbox model ratio</div>
<div class="cb" style="left:436px;top:572px;width:121px;height:23px"></div>
<div class="lb" style="left:439px;top:575px;letter-spacing:-0.700px;">8HP55_8HP70</div>
<svg style="position:absolute;left:544px;top:581px" width="9" height="5" viewBox="0 0 9 5"><path d="M0.5 0.5L4.5 4.5L8.5 0.5" fill="none" stroke="#444" stroke-width="1"/></svg>
<svg style="position:absolute;left:613px;top:534px" width="13" height="13" viewBox="0 0 13 13"><circle cx="6.5" cy="6.5" r="5.9" fill="#fff" stroke="#333" stroke-width="1.2"/></svg><div class="lb" style="left:632px;top:533px;letter-spacing:-0.150px;">Km/h Values</div>
<div class="lb" style="left:613px;top:553px;letter-spacing:0.015px;">Differential ratio</div>
<div class="cb dis" style="left:613px;top:571px;width:50px;height:23px"></div><div style="left:616px;top:574px;width:27px;height:17px;background:#f0f0f0"></div><div class="lb" style="left:616px;top:574px;color:#707070;letter-spacing:-0.5px;-webkit-text-stroke:0">2.81</div><svg style="position:absolute;left:650px;top:580px" width="9" height="5" viewBox="0 0 9 5"><path d="M0.5 0.5L4.5 4.5L8.5 0.5" fill="none" stroke="#a8a8a8" stroke-width="1"/></svg>
<div class="lb" style="left:613px;top:597px;letter-spacing:-0.481px;">Rear tire size</div>
<div class="cb dis" style="left:613px;top:615px;width:50px;height:23px"></div><div style="left:616px;top:618px;width:27px;height:17px;background:#f0f0f0"></div><div class="lb" style="left:616px;top:618px;color:#707070;letter-spacing:-0.5px;-webkit-text-stroke:0">275</div><svg style="position:absolute;left:650px;top:624px" width="9" height="5" viewBox="0 0 9 5"><path d="M0.5 0.5L4.5 4.5L8.5 0.5" fill="none" stroke="#a8a8a8" stroke-width="1"/></svg>
<svg style="position:absolute;left:666px;top:620px" width="9" height="12" viewBox="0 0 9 12"><path d="M2.3 11L6.8 1" fill="none" stroke="#000" stroke-width="2"/></svg>
<div class="cb dis" style="left:679px;top:615px;width:35px;height:23px"></div><div style="left:682px;top:618px;width:12px;height:17px;background:#f0f0f0"></div><div class="lb" style="left:682px;top:618px;color:#707070;letter-spacing:-0.5px;-webkit-text-stroke:0">35</div><svg style="position:absolute;left:701px;top:624px" width="9" height="5" viewBox="0 0 9 5"><path d="M0.5 0.5L4.5 4.5L8.5 0.5" fill="none" stroke="#a8a8a8" stroke-width="1"/></svg>
<div class="lb" style="left:719px;top:618px;font-weight:bold">R</div>
<div class="cb dis" style="left:733px;top:615px;width:35px;height:23px"></div><div style="left:736px;top:618px;width:12px;height:17px;background:#f0f0f0"></div><div class="lb" style="left:736px;top:618px;color:#707070;letter-spacing:-0.5px;-webkit-text-stroke:0">20</div><svg style="position:absolute;left:755px;top:624px" width="9" height="5" viewBox="0 0 9 5"><path d="M0.5 0.5L4.5 4.5L8.5 0.5" fill="none" stroke="#a8a8a8" stroke-width="1"/></svg>
<div class="gb" style="left:819px;top:507px;width:341px;height:148px"></div><div class="gt" style="left:822px;top:499px;letter-spacing:-0.046px;">Map operations</div>
<div class="btn" style="left:845px;top:541px;width:138px;letter-spacing:-0.043px;">Copy entire map</div>
<div class="btn dis" style="left:991px;top:541px;width:138px;letter-spacing:-0.400px;">Step back</div>
<div class="btn dis" style="left:845px;top:570px;width:138px;letter-spacing:-0.227px;">Paste entire map</div>
<div class="btn dis" style="left:991px;top:570px;width:138px;letter-spacing:-0.118px;">Step forward</div>
<div class="btn dis" style="left:845px;top:599px;width:138px;letter-spacing:-0.242px;">Restore previous map</div>
<div class="btn dis" style="left:991px;top:599px;width:138px;letter-spacing:-0.147px;">Restore original map</div>
<div class="lb" style="left:594px;top:670px;letter-spacing:-0.197px;">© 2025 MWCarTech. All rights reserved.</div>
</body></html>
